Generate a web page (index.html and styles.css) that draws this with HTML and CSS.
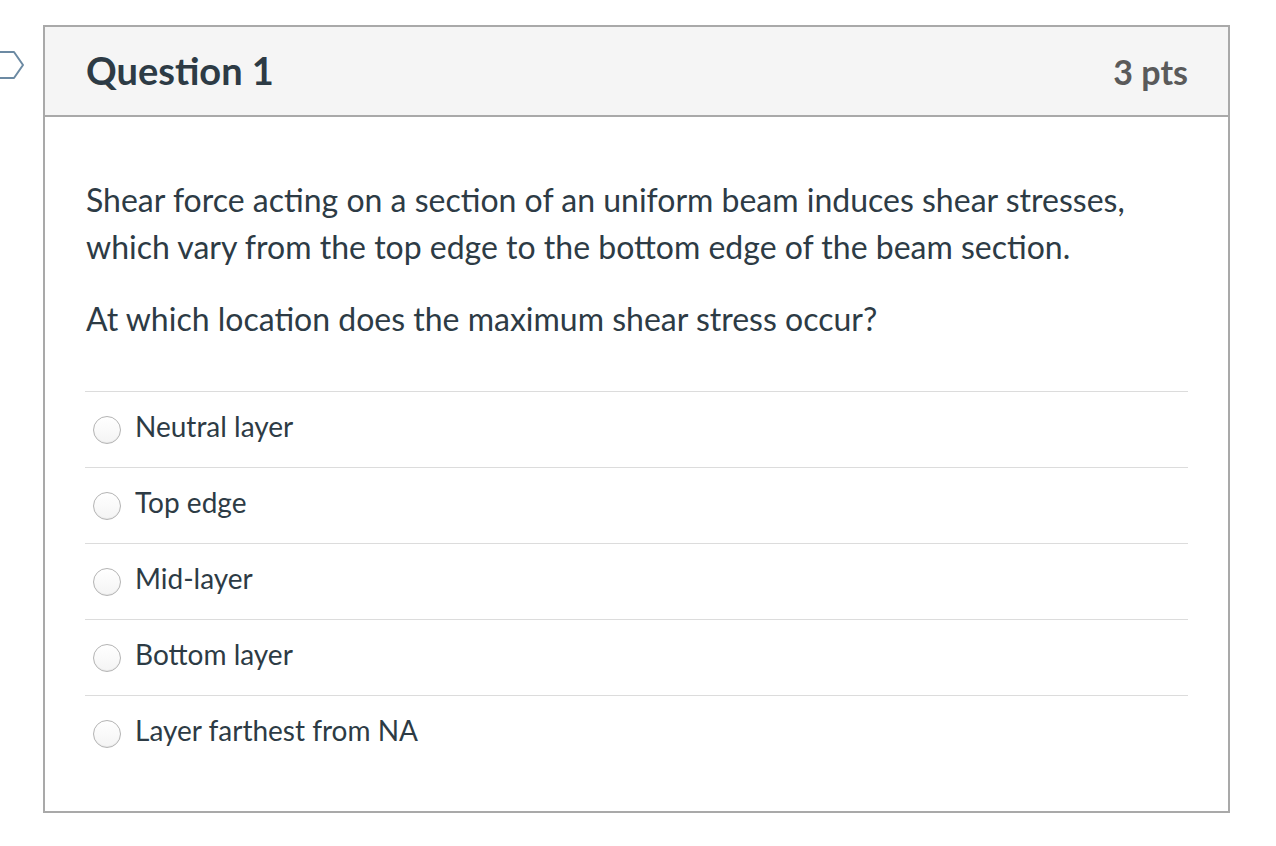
FILE: index.html
```html
<!DOCTYPE html>
<html lang="en">
<head>
<meta charset="utf-8">
<title>Question 1</title>
<link rel="stylesheet" href="styles.css">
</head>
<body>
<div class="page">
  <div class="flag">
    <svg width="40" height="30" viewBox="0 0 40 30"><path d="M-10 2 H14 L23 15 L14 28 H-10" fill="none" stroke="#6c8aa3" stroke-width="2" stroke-linejoin="round"/></svg>
  </div>
  <div class="question">
    <div class="q-header">
      <h2 class="q-title">Question 1</h2>
      <span class="q-pts">3 pts</span>
    </div>
    <div class="q-body">
      <div class="q-text">
        <p>Shear force acting on a section of an uniform beam induces shear stresses, which vary from the top edge to the bottom edge of the beam section.</p>
        <p>At which location does the maximum shear stress occur?</p>
      </div>
      <div class="answers">
        <label class="answer"><span class="radio"></span><span class="a-text">Neutral layer</span></label>
        <label class="answer"><span class="radio"></span><span class="a-text">Top edge</span></label>
        <label class="answer"><span class="radio"></span><span class="a-text">Mid-layer</span></label>
        <label class="answer"><span class="radio"></span><span class="a-text">Bottom layer</span></label>
        <label class="answer"><span class="radio"></span><span class="a-text">Layer farthest from NA</span></label>
      </div>
    </div>
  </div>
</div>
</body>
</html>
```

FILE: styles.css
```css
* { box-sizing: border-box; }
html, body { margin: 0; padding: 0; background: #fff; }
body {
  font-family: Lato, "Open Sans", sans-serif;
  color: #2d3b45;
}
.page {
  position: relative;
  padding: 25px 0 0 43px;
}
.flag {
  position: absolute;
  left: 0;
  top: 50px;
  width: 40px;
  height: 30px;
}
.flag svg { display: block; }
.question {
  width: 1187px;
  border: 2px solid #a9a9a9;
}
.q-header {
  height: 90px;
  background: #f5f5f5;
  border-bottom: 2px solid #a9a9a9;
  display: flex;
  align-items: center;
  justify-content: space-between;
  padding: 0 40px 0 41px;
}
.q-title {
  margin: 0 0 2px 0;
  font-size: 38px;
  font-weight: 700;
  color: #2d3b45;
}
.q-pts {
  font-size: 34px;
  font-weight: 700;
  color: #5a5a5a;
}
.q-body {
  padding: 59px 40px 40px 40px;
}
.q-text {
  font-size: 32px;
  line-height: 47px;
  padding-left: 1px;
}
.q-text p { margin: 0 0 25px 0; }
.q-text p:last-child { margin-bottom: 0; }
.answers { margin-top: 49px; }
.answer {
  display: flex;
  align-items: center;
  height: 76px;
  border-top: 1px solid #dcdcdc;
  padding-left: 8px;
}
.radio {
  width: 28px;
  height: 28px;
  border-radius: 50%;
  border: 1px solid #b4b4b4;
  background: linear-gradient(#ffffff, #f4f4f4);
  box-shadow: inset 0 -1px 1px rgba(0,0,0,0.05);
  flex: none;
}
.a-text {
  margin-left: 14px;
  margin-bottom: 7px;
  font-size: 28px;
  color: #2d3b45;
}
```
